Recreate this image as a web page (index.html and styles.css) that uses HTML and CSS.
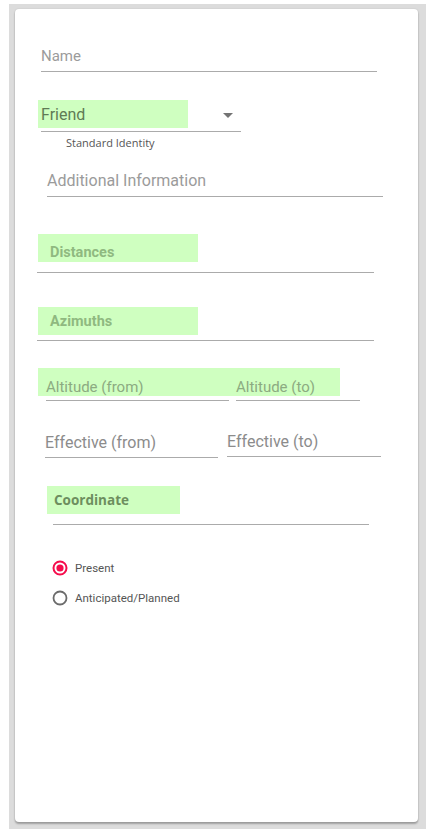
FILE: index.html
```html
<!DOCTYPE html>
<html>
<head>
<meta charset="utf-8">
<link rel="stylesheet" href="styles.css">
</head>
<body>
<div class="panel">
  <div class="card">
    <div class="field name"><span class="ph">Name</span></div>

    <div class="select">
      <span class="hl-friend">Friend</span>
      <span class="arrow"></span>
    </div>
    <div class="hint">Standard Identity</div>

    <div class="field addinfo"><span class="ph big">Additional Information</span></div>

    <div class="field distances"><span class="hl-bold hl-low">Distances</span></div>
    <div class="field azimuths"><span class="hl-bold">Azimuths</span></div>

    <div class="row altitude">
      <div class="field alt-from"><span class="ph hl-text">Altitude (from)</span></div>
      <div class="field alt-to"><span class="ph hl-text">Altitude (to)</span></div>
    </div>

    <div class="row effective">
      <div class="field eff-from"><span class="ph big dark">Effective (from)</span></div>
      <div class="field eff-to"><span class="ph big dark">Effective (to)</span></div>
    </div>

    <div class="field coordinate"><span class="hl-coord">Coordinate</span></div>

    <div class="radio first">
      <svg class="rb" width="16" height="16" viewBox="0 0 16 16"><circle cx="8" cy="8" r="6.5" fill="none" stroke="#f50c4c" stroke-width="2"/><circle cx="8" cy="8" r="3.6" fill="#f50c4c"/></svg>
      <span class="rl">Present</span>
    </div>
    <div class="radio second">
      <svg class="rb" width="16" height="16" viewBox="0 0 16 16"><circle cx="8" cy="8" r="6.5" fill="none" stroke="#6b6b6b" stroke-width="1.8"/></svg>
      <span class="rl">Anticipated/Planned</span>
    </div>
  </div>
</div>
</body>
</html>
```
FILE: styles.css
```css
html, body {
  margin: 0;
  padding: 0;
  background: #ffffff;
}
body {
  font-family: Roboto, "Liberation Sans", Arial, sans-serif;
}
.panel {
  margin: 4px 7px 0 9px;
  height: 825px;
  background: #dcdcdc;
  padding: 5px 8px 0 6px;
  box-sizing: border-box;
}
.card {
  width: 403px;
  height: 813px;
  background: #ffffff;
  border-radius: 4px;
  box-shadow: 0 2px 2px rgba(0, 0, 0, 0.28), 0 0 2px rgba(0, 0, 0, 0.12);
  display: flex;
  flex-direction: column;
  align-items: flex-start;
}
.field {
  box-sizing: content-box;
  border-bottom: 1px solid #ababab;
  display: flex;
  align-items: flex-start;
}
.ph {
  font-size: 15px;
  line-height: 20px;
  color: #9b9b9b;
}
.ph.big { font-size: 16px; }
.ph.dark { color: #8c8c8c; }

.name {
  margin: 36px 0 0 26px;
  width: 336px;
  padding-top: 1px;
  height: 25px;
}

.select {
  margin: 28px 0 0 26px;
  width: 200px;
  height: 31px;
  border-bottom: 1px solid #ababab;
  display: flex;
  align-items: flex-start;
  justify-content: space-between;
}
.hl-friend {
  display: inline-block;
  margin-left: -3px;
  padding-left: 3px;
  width: 147px;
  height: 28px;
  line-height: 30px;
  background: #cfffc0;
  font-size: 16px;
  color: #5f7a55;
}
.arrow {
  width: 0;
  height: 0;
  margin: 13px 8px 0 0;
  border-left: 5px solid transparent;
  border-right: 5px solid transparent;
  border-top: 5px solid #747474;
}
.hint {
  margin: 4px 0 0 51px;
  font-family: "Open Sans", "DejaVu Sans", sans-serif;
  font-size: 11px;
  line-height: 14px;
  color: #555555;
}

.addinfo {
  margin: 20px 0 0 32px;
  width: 336px;
  padding-top: 1px;
  height: 25px;
}

.hl-bold {
  display: block;
  box-sizing: border-box;
  width: 160px;
  height: 28px;
  margin-left: 1px;
  padding-left: 12px;
  background: #cfffc0;
  font-size: 14.5px;
  font-weight: 700;
  line-height: 30px;
  color: #8fb980;
}
.hl-low {
  padding-top: 10px;
  line-height: 18px;
}
.distances {
  margin: 37px 0 0 22px;
  width: 337px;
  height: 38px;
}
.azimuths {
  margin: 34px 0 0 22px;
  width: 337px;
  height: 33px;
}

.row {
  display: flex;
  align-items: flex-start;
}
.altitude {
  margin: 27px 0 0 23px;
  padding-left: 8px;
  gap: 7px;
  background: linear-gradient(#cfffc0, #cfffc0) no-repeat 0 0 / 302px 28px;
}
.altitude .field {
  height: 23px;
  padding-top: 9px;
}
.alt-from { width: 183px; }
.alt-to { width: 124px; }
.hl-text { color: #8cab81; }

.effective {
  margin: 30px 0 0 30px;
  gap: 9px;
}
.eff-from {
  width: 173px;
  padding-top: 2px;
  height: 24px;
}
.eff-to {
  width: 154px;
  padding-top: 1px;
  height: 24px;
}

.coordinate {
  margin: 28px 0 0 38px;
  width: 316px;
  height: 38px;
}
.hl-coord {
  display: block;
  box-sizing: border-box;
  margin-left: -6px;
  width: 133px;
  height: 28px;
  padding-left: 7px;
  background: #cfffc0;
  font-family: "Open Sans", "DejaVu Sans", sans-serif;
  font-size: 13.5px;
  font-weight: 700;
  line-height: 29px;
  color: #6d8e5e;
}

.radio {
  display: flex;
  align-items: center;
  margin-left: 37px;
  height: 16px;
}
.radio.first { margin-top: 35px; }
.radio.second { margin-top: 14px; }
.rb { flex: none; display: block; }
.rl {
  margin-left: 7px;
  font-size: 11.5px;
  line-height: 16px;
  color: #555555;
}
```
